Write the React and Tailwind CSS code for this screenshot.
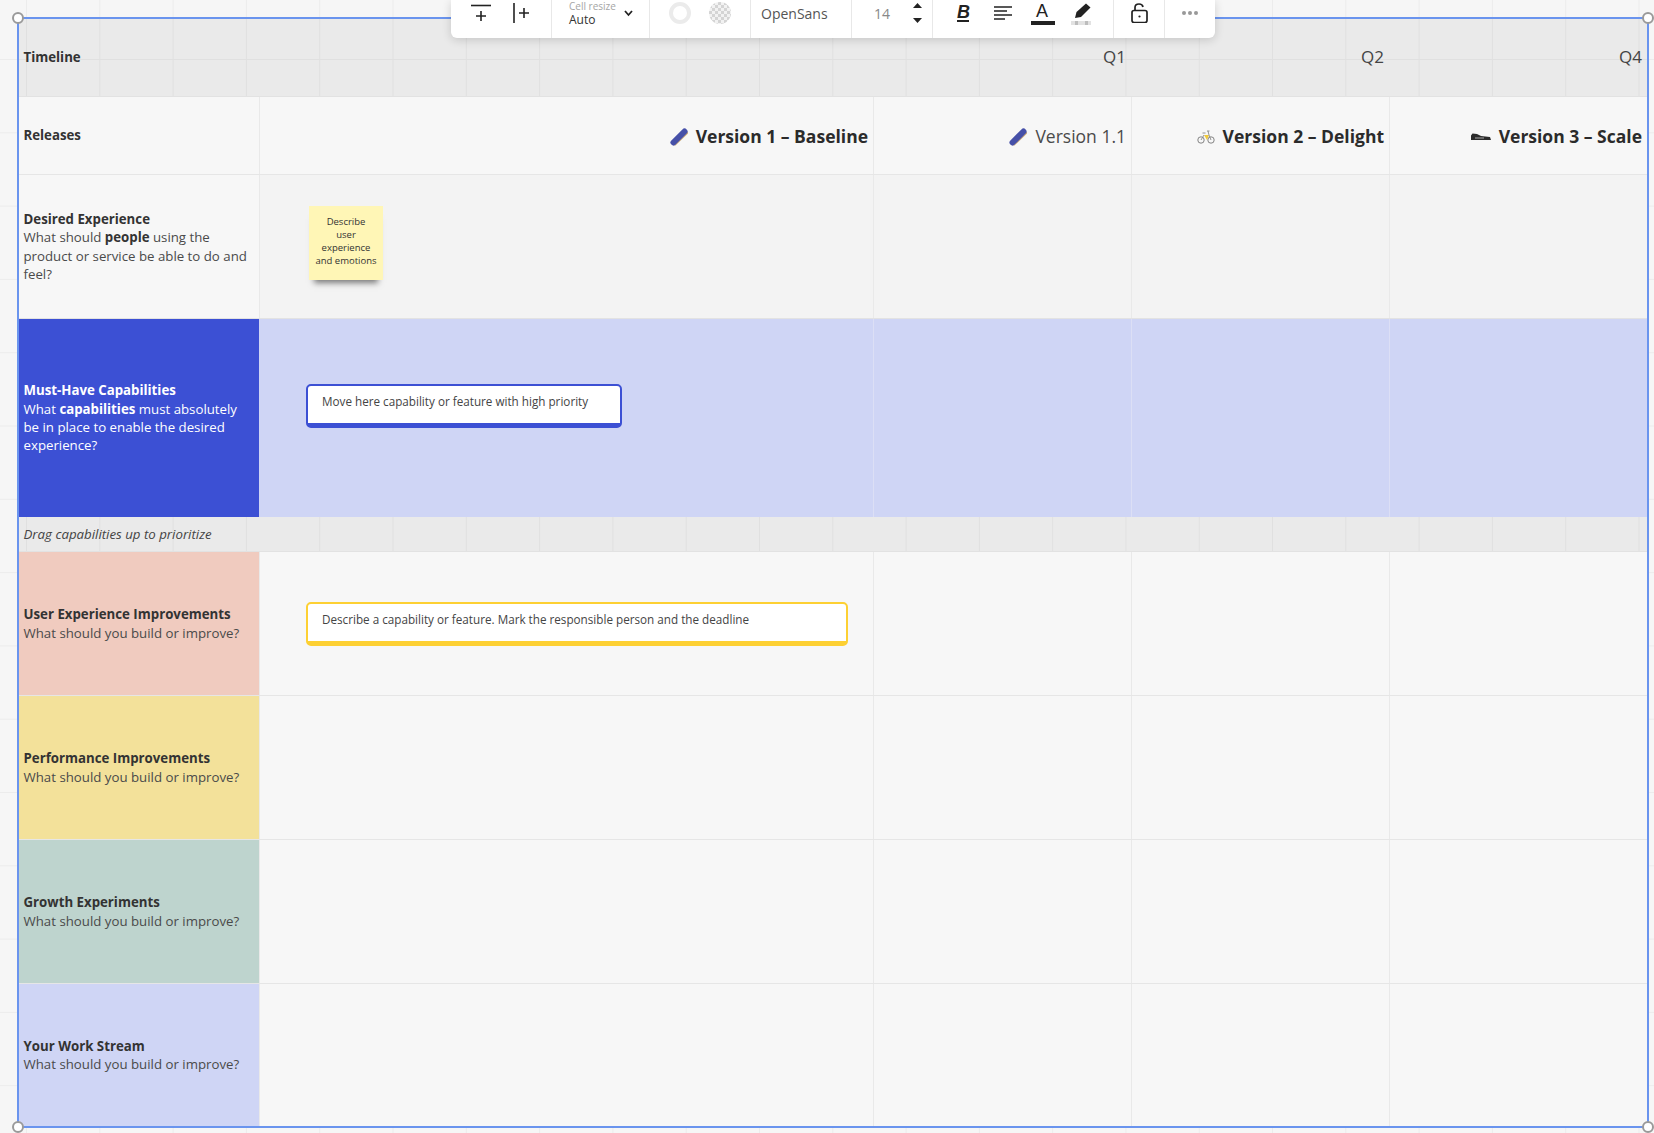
const Sans = "font-['Open_Sans',sans-serif]";

const rows = [
  { title: 'User Experience Improvements', bg: 'bg-[#f0cbbf]', h: 'h-[144px]' },
  { title: 'Performance Improvements', bg: 'bg-[#f3e19a]', h: 'h-[144px]' },
  { title: 'Growth Experiments', bg: 'bg-[#bed4ce]', h: 'h-[144px]' },
  { title: 'Your Work Stream', bg: 'bg-[#cfd5f5]', h: 'h-[142px]' },
];

const colClass = 'grid grid-cols-[241px_614px_258px_258px_1fr]';

const Skateboard = () => (
  <svg width="18" height="18" viewBox="0 0 18 18" fill="none" strokeLinecap="round">
    <path d="M5 16 L16.5 5" stroke="#c9a878" strokeWidth="3" />
    <path d="M3.5 14.5 L14.5 3.5" stroke="#4650a8" strokeWidth="6" />
  </svg>
);

const Bike = () => (
  <svg width="18" height="15" viewBox="0 0 18 15" fill="none">
    <circle cx="4" cy="11" r="3.2" stroke="#777" strokeWidth="0.9" />
    <circle cx="14" cy="11" r="3.2" stroke="#777" strokeWidth="0.9" />
    <path d="M7 6 L12 6 L10 11 Z" fill="#f0c93a" />
    <path d="M4 11 L7 6 M12 6 L14 11 M11 2 L12 6 M5.5 4 H8.5 M10 2 H12.5" stroke="#888" strokeWidth="0.9" />
  </svg>
);

const Shoe = () => (
  <svg width="20" height="7" viewBox="0 0 20 7">
    <path d="M0 2.5 L1.5 0.5 L6 1 L10 3 L19 4 L20 7 L0 7 Z" fill="#2b2b2b" />
    <rect x="4" y="4.5" width="9" height="1" fill="#aaa" />
  </svg>
);

const Version = ({ icon, label, bold = true, last = false }) => (
  <div className={`h-full flex items-center justify-end gap-[8px] pr-[5px] pt-[2px] text-[17.5px] ${last ? '' : 'border-r border-[#e9e9e9]'} ${bold ? 'font-bold text-[#2b2b2b]' : 'font-normal text-[#4a4a4a]'}`}>
    {icon}
    <span>{label}</span>
  </div>
);

const Toolbar = () => (
  <div className={`absolute left-[451px] top-0 w-[764px] h-[38px] bg-white rounded-b-[6px] shadow-[0_2px_10px_rgba(0,0,0,0.16)] flex items-stretch text-[#333] ${Sans}`}>
    <div className="w-[101px] border-r border-[#e8e8e8] flex items-start pl-[20px] pt-[3px] gap-[22px]">
      <svg width="20" height="20" viewBox="0 0 20 20" fill="none" stroke="#222" strokeWidth="1.6">
        <path d="M0 2.5 H20" />
        <path d="M10 8 V18 M5 13 H15" />
      </svg>
      <svg width="17" height="20" viewBox="0 0 17 20" fill="none" stroke="#222" strokeWidth="1.6">
        <path d="M1 0 V20" />
        <path d="M11 5 V15 M6 10 H16" />
      </svg>
    </div>
    <div className="w-[98px] border-r border-[#e8e8e8] pl-[17px] relative">
      <div className="text-[10px] leading-[10px] text-[#a5a5a5] pt-px">Cell resize</div>
      <div className="text-[12px] leading-[14px] mt-[2px] text-[#333]">Auto</div>
      <svg className="absolute left-[72px] top-[10px]" width="9" height="7" viewBox="0 0 9 7" fill="none" stroke="#222" strokeWidth="1.8">
        <path d="M1 1 L4.5 5 L8 1" />
      </svg>
    </div>
    <div className="w-[101px] border-r border-[#e8e8e8] flex items-start pl-[19px] pt-[2px] gap-[18px]">
      <div className="w-[22px] h-[22px] rounded-full border-[4px] border-[#ebebeb]" />
      <div className="w-[22px] h-[22px] rounded-full bg-[repeating-conic-gradient(#d4d4d4_0_25%,#f2f2f2_0_50%)] bg-[length:6px_6px]" />
    </div>
    <div className="w-[101px] border-r border-[#e8e8e8] pl-[10px] pt-[4px] text-[14px] leading-[20px] text-[#555]">OpenSans</div>
    <div className="w-[81px] border-r border-[#e8e8e8] relative pl-[22px] pt-[4px] text-[14px] leading-[20px] text-[#888]">
      14
      <svg className="absolute left-[61px] top-[3px]" width="9" height="20" viewBox="0 0 9 20" fill="#222">
        <path d="M4.5 0 L9 5 H0 Z" />
        <path d="M4.5 20 L9 15 H0 Z" />
      </svg>
    </div>
    <div className="w-[181px] border-r border-[#e8e8e8] relative font-['Liberation_Sans',sans-serif]">
      <span className="absolute left-[24px] top-[1px] text-[18px] leading-[22px] font-bold italic text-[#222]">B</span>
      <div className="absolute left-[24px] top-[20px] w-[12px] h-[2px] bg-[#222]" />
      <svg className="absolute left-[61px] top-[6px]" width="18" height="14" viewBox="0 0 18 14" fill="none" stroke="#222" strokeWidth="1.5">
        <path d="M0 1 H18 M0 5 H13 M0 9 H18 M0 13 H11" />
      </svg>
      <span className="absolute left-[103px] top-0 text-[18px] leading-[22px] text-[#222]">A</span>
      <div className="absolute left-[98px] top-[21px] w-[24px] h-[4px] bg-[#222]" />
      <svg className="absolute left-[142px] top-[3px]" width="16" height="15" viewBox="0 0 16 15" fill="#222">
        <path d="M11 0.5 L15.5 4.5 L6 14 L0 15 L1.5 9 Z" />
      </svg>
      <div className="absolute left-[138px] top-[21px] w-[20px] h-[4px] bg-[repeating-linear-gradient(90deg,#e2e2e2_0_4px,#bdbdbd_4px_7px,#e2e2e2_7px_10px)]" />
    </div>
    <div className="w-[51px] border-r border-[#e8e8e8] pl-[17px] pt-[3px]">
      <svg width="17" height="20" viewBox="0 0 17 20" fill="none" stroke="#222" strokeWidth="1.7">
        <rect x="1" y="7.5" width="15" height="12" rx="2" />
        <path d="M4 7.5 V4.5 Q4 1 8 1 Q11.5 1 12 4" />
        <circle cx="8.5" cy="13.5" r="1.1" fill="#222" stroke="none" />
      </svg>
    </div>
    <div className="flex-1 flex justify-center pt-[11px]">
      <div className="flex gap-[2px]">
        <div className="w-[4px] h-[4px] rounded-full bg-[#999]" />
        <div className="w-[4px] h-[4px] rounded-full bg-[#999]" />
        <div className="w-[4px] h-[4px] rounded-full bg-[#999]" />
      </div>
    </div>
  </div>
);

const Handle = ({ className }) => (
  <div className={`absolute w-[12px] h-[12px] rounded-full bg-white border-2 border-[#9a9a9a] ${className}`} />
);

const Card = ({ color, width, children }) => (
  <div className={`rounded-[5px] border-t-2 border-x-2 border-b-[5px] bg-white h-[44px] pl-[14px] pt-[6px] text-[11.7px] leading-[18px] text-[#444] ${color} ${width}`}>
    {children}
  </div>
);

export default function App() {
  return (
    <div className={`relative w-[1654px] h-[1133px] overflow-hidden pl-[17px] pt-[17px] bg-[#f6f6f6] bg-[linear-gradient(#ececec_1px,transparent_1px),linear-gradient(90deg,#ececec_1px,transparent_1px)] bg-[length:73.3px_73.3px] bg-[position:26px_59px] ${Sans}`}>
      <div className="w-[1632px] h-[1111px] border-2 border-[#6a94ee] text-[13.25px] leading-[18.3px] text-[#4a4a4a]">
        <div className={`${colClass} h-[78px] bg-[#0000000c] border-b border-[#e2e2e2]`}>
          <div className="flex items-center pl-[4.5px] font-bold text-[#333]">Timeline</div>
          <div />
          <div className="flex items-center justify-end pr-[6px] text-[17px] text-[#444]">Q1</div>
          <div className="flex items-center justify-end pr-[6px] text-[17px] text-[#444]">Q2</div>
          <div className="flex items-center justify-end pr-[5px] text-[17px] text-[#444]">Q4</div>
        </div>

        <div className={`${colClass} h-[78px] bg-[#f7f7f7] border-b border-[#e6e6e6]`}>
          <div className="flex items-center pl-[4.5px] font-bold text-[#333] border-r border-[#e9e9e9]">Releases</div>
          <Version icon={<Skateboard />} label="Version 1 – Baseline" />
          <Version icon={<Skateboard />} label="Version 1.1" bold={false} />
          <Version icon={<Bike />} label="Version 2 – Delight" />
          <Version icon={<Shoe />} label="Version 3 – Scale" last />
        </div>

        <div className={`${colClass} h-[144px] bg-[#f3f3f3] border-b border-[#e2e2e2]`}>
          <div className="flex flex-col justify-center pl-[4.5px] pr-[10px] bg-[#f7f7f7] border-r border-[#e9e9e9]">
            <div className="font-bold text-[#333]">Desired Experience</div>
            <div>What should <b className="text-[#333]">people</b> using the product or service be able to do and feel?</div>
          </div>
          <div className="flex items-start pl-[49px] pt-[31px] border-r border-[#e9e9e9]">
            <div className="w-[74px] h-[74px] bg-[#fff6b6] shadow-[0_8px_6px_-5px_rgba(0,0,0,0.5)] text-center text-[9.5px] leading-[13px] text-[#333] pt-[9px]">
              Describe<br />user<br />experience<br />and emotions
            </div>
          </div>
          <div className="border-r border-[#e9e9e9]" />
          <div className="border-r border-[#e9e9e9]" />
          <div />
        </div>

        <div className={`${colClass} h-[198px] bg-[#cfd5f5]`}>
          <div className="flex flex-col justify-center pl-[4.5px] pr-[10px] bg-[#3c50d4] text-white border-r border-[#cfd5f5]">
            <div className="font-bold">Must-Have Capabilities</div>
            <div>What <b>capabilities</b> must absolutely be in place to enable the desired experience?</div>
          </div>
          <div className="flex items-start pl-[46px] pt-[65px] border-r border-[#dcdff5]">
            <Card color="border-[#3c50d4]" width="w-[316px]">Move here capability or feature with high priority</Card>
          </div>
          <div className="border-r border-[#dcdff5]" />
          <div className="border-r border-[#dcdff5]" />
          <div />
        </div>

        <div className="h-[35px] bg-[#0000000c] border-b border-[#e2e2e2] flex items-center pl-[4.5px] italic text-[#444]">
          Drag capabilities up to prioritize
        </div>

        {rows.map((row, i) => (
          <div key={row.title} className={`${colClass} ${row.h} bg-[#f7f7f7] border-b border-[#e6e6e6] last:border-b-0`}>
            <div className={`flex flex-col justify-center pl-[4.5px] border-r border-[#e9e9e9] ${row.bg}`}>
              <div className="font-bold text-[#333]">{row.title}</div>
              <div>What should you build or improve?</div>
            </div>
            <div className="flex items-center pl-[46px] border-r border-[#e9e9e9]">
              {i === 0 && <Card color="border-[#fdd033]" width="w-[542px]">Describe a capability or feature. Mark the responsible person and the deadline</Card>}
            </div>
            <div className="border-r border-[#e9e9e9]" />
            <div className="border-r border-[#e9e9e9]" />
            <div />
          </div>
        ))}
      </div>

      <Handle className="left-[12px] top-[12px]" />
      <Handle className="left-[1642px] top-[12px]" />
      <Handle className="left-[12px] top-[1121px]" />
      <Handle className="left-[1642px] top-[1121px]" />
      <Toolbar />
    </div>
  );
}
